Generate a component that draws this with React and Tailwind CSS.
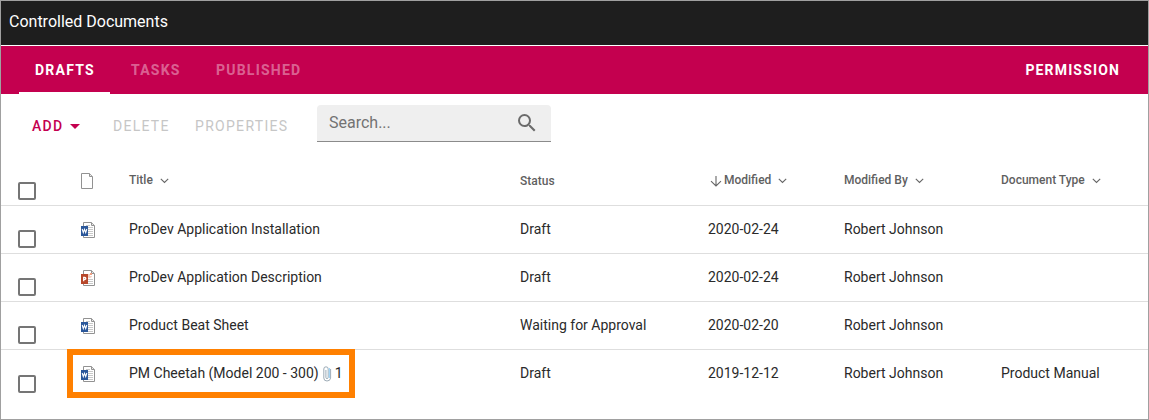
const COLS =
  "grid grid-cols-[17px_63px_48px_391px_188px_136px_157px_147px]";

const ROWS = [
  { kind: "word", title: "ProDev Application Installation", status: "Draft", modified: "2020-02-24", by: "Robert Johnson", type: "" },
  { kind: "ppt", title: "ProDev Application Description", status: "Draft", modified: "2020-02-24", by: "Robert Johnson", type: "" },
  { kind: "word", title: "Product Beat Sheet", status: "Waiting for Approval", modified: "2020-02-20", by: "Robert Johnson", type: "" },
  { kind: "word", title: "PM Cheetah (Model 200 - 300)", attachments: 1, status: "Draft", modified: "2019-12-12", by: "Robert Johnson", type: "Product Manual" },
];

function Checkbox() {
  return <span className="block h-[18px] w-[18px] rounded-[2px] border-2 border-[#757575]" />;
}

function Chevron() {
  return (
    <svg className="ml-[7px] mt-[2px] shrink-0" width="9" height="6" viewBox="0 0 9 6" fill="none" stroke="#666" strokeWidth="1.1">
      <path d="M0.8 0.8 4.5 4.5 8.2 0.8" />
    </svg>
  );
}

function BlankPage() {
  return (
    <svg width="12" height="16" viewBox="0 0 12 16" fill="none" stroke="#929292">
      <path d="M0.5 0.5H8.3L11.5 3.7V15.5H0.5Z" />
      <path d="M8.5 0.5V3.5H11.5" />
    </svg>
  );
}

function FileIcon({ kind }) {
  const word = kind === "word";
  return (
    <svg width="14" height="16" viewBox="0 0 14 16" fill="none">
      <path d="M2.5 4V0.5H10.3L13.5 3.7V15.5H2.5V13" stroke="#929292" />
      <path d="M10.5 0.5V3.5H13.5" stroke="#929292" />
      {word ? (
        <path d="M5 3.5H9M7 5.5H12M7 7.5H12M7 9.5H12M7 11.5H12M5 13.5H12" stroke="#c8c8c8" />
      ) : (
        <>
          <path d="M7 9.5H12M7 11.5H12M5 13.5H12" stroke="#c8c8c8" />
          <path d="M7 4H9V6H11A2.6 2.6 0 0 1 7 7.6Z" fill="#f3cdbf" />
          <path d="M9 3H11V5H9Z" fill="#f0a184" />
        </>
      )}
      <path d="M0 4H7V14H0Z" fill={word ? "#2a579a" : "#b7472a"} />
      {word ? (
        <path d="M1.2 7 2.3 10.6 3.5 7.4 4.7 10.6 5.8 7" stroke="#fff" strokeWidth="1.1" />
      ) : (
        <path d="M2.7 11.2V7.4H3.8Q4.8 7.4 4.8 8.4T3.8 9.4H2.7" stroke="#fff" strokeWidth="1.3" />
      )}
    </svg>
  );
}

function Clip() {
  return (
    <svg className="ml-[4px] mt-px" width="9" height="16" viewBox="0 0 9 16" fill="none">
      <path d="M2.9 4V11.4Q2.9 12.6 4 12.6T5.2 11.4V3Q5.2 0.8 3 0.8T0.8 3V12Q0.8 15 4 15T7.6 12V3" stroke="#8496a3" strokeWidth="0.8" />
      <path d="M6.4 2V12" stroke="#a3d4f5" strokeWidth="1.3" />
    </svg>
  );
}

function Heading({ children, sorted }) {
  return (
    <div className="flex h-4 items-center">
      {sorted && (
        <svg className="ml-[2px] mr-[2px] mt-[2px]" width="12" height="11" viewBox="0 0 12 11" fill="none" stroke="#666" strokeWidth="1.1">
          <path d="M6 0V10M1 5.2 6 10 11 5.2" />
        </svg>
      )}
      <span>{children}</span>
      <Chevron />
    </div>
  );
}

export default function App() {
  return (
    <div className="relative flex h-[420px] w-[1149px] flex-col overflow-hidden border border-[#a0a0a0] bg-white font-['Roboto',sans-serif]">
      <header className="h-11 shrink-0 bg-[#1e1e1e] pl-2 text-[16px] leading-[41px] text-white">
        Controlled Documents
      </header>
      <nav className="mt-px flex h-12 shrink-0 bg-[#c4004f] pl-[18px] pr-[28px] text-[14px] font-bold leading-[49px] tracking-[1.22px] text-white">
        <span className="w-[91px] border-b-2 border-white pl-4">DRAFTS</span>
        <span className="ml-[21px] w-[85px] text-white/40">TASKS</span>
        <span className="text-white/40">PUBLISHED</span>
        <span className="ml-auto tracking-[1.15px]">PERMISSION</span>
      </nav>
      <div className="flex h-[62px] shrink-0 pl-[31px] text-[14px] leading-[64px] tracking-[1.25px] text-[#c6c6c6]">
        <div className="flex h-16 w-[81px] items-center font-medium leading-[16px] text-[#c4004f]">
          <span>ADD</span>
          <svg className="ml-[7px]" width="10" height="5" viewBox="0 0 10 5">
            <path d="M0 0H10L5 5Z" fill="#c4004f" />
          </svg>
        </div>
        <span className="w-[82px]">DELETE</span>
        <span className="w-[122px] tracking-[1.3px]">PROPERTIES</span>
        <div className="mt-[11px] flex h-[37px] w-[234px] items-center justify-between rounded-t-[4px] border-b border-[#8b8b8b] bg-[#efefef] pl-3 pr-[15px] text-[16px] leading-[34px] tracking-normal text-[#737373]">
          <span>Search...</span>
          <svg width="18" height="18" viewBox="3 3 18 18" fill="#6b6b6b">
            <path d="M15.5 14h-.79l-.28-.27A6.471 6.471 0 0 0 16 9.500 6.500 6.500 0 1 0 9.500 16c1.610 0 3.090-.59 4.230-1.570l.27.28v.79l5 4.990L20.490 19l-4.990-5zm-6 0C7.010 14 5 11.990 5 9.500S7.010 5 9.500 5 14 7.010 14 9.500 11.990 14 9.500 14z" />
          </svg>
        </div>
      </div>
      <div className={COLS + " h-[50px] shrink-0 border-b border-[#dedede] pt-[16px] text-[12px] font-medium leading-4 text-[#5f5f5f]"}>
        <span />
        <div className="pt-[10px]"><Checkbox /></div>
        <div className="pt-px"><BlankPage /></div>
        <Heading>Title</Heading>
        <span className="pt-px">Status</span>
        <Heading sorted>Modified</Heading>
        <Heading>Modified By</Heading>
        <Heading>Document Type</Heading>
      </div>
      {ROWS.map((r, i) => {
        const last = i === ROWS.length - 1;
        return (
          <div key={r.title} className={COLS + " h-12 shrink-0 pt-[15px] text-[14px] leading-4 text-[#2a2a2a] " + (last ? "" : "border-b border-[#dedede]")}>
            <span />
            <div className={last ? "pt-[10px]" : "pt-[9px]"}><Checkbox /></div>
            <div className="pt-px"><FileIcon kind={r.kind} /></div>
            <div className="flex h-4">
              <span>{r.title}</span>
              {r.attachments && (
                <>
                  <Clip />
                  <span className="ml-[3px]">{r.attachments}</span>
                </>
              )}
            </div>
            <span>{r.status}</span>
            <span>{r.modified}</span>
            <span>{r.by}</span>
            <span>{r.type}</span>
          </div>
        );
      })}
      <div className="absolute left-[66px] top-[348px] h-[49px] w-[288px] border-[6px] border-[#ff8000]" />
    </div>
  );
}
